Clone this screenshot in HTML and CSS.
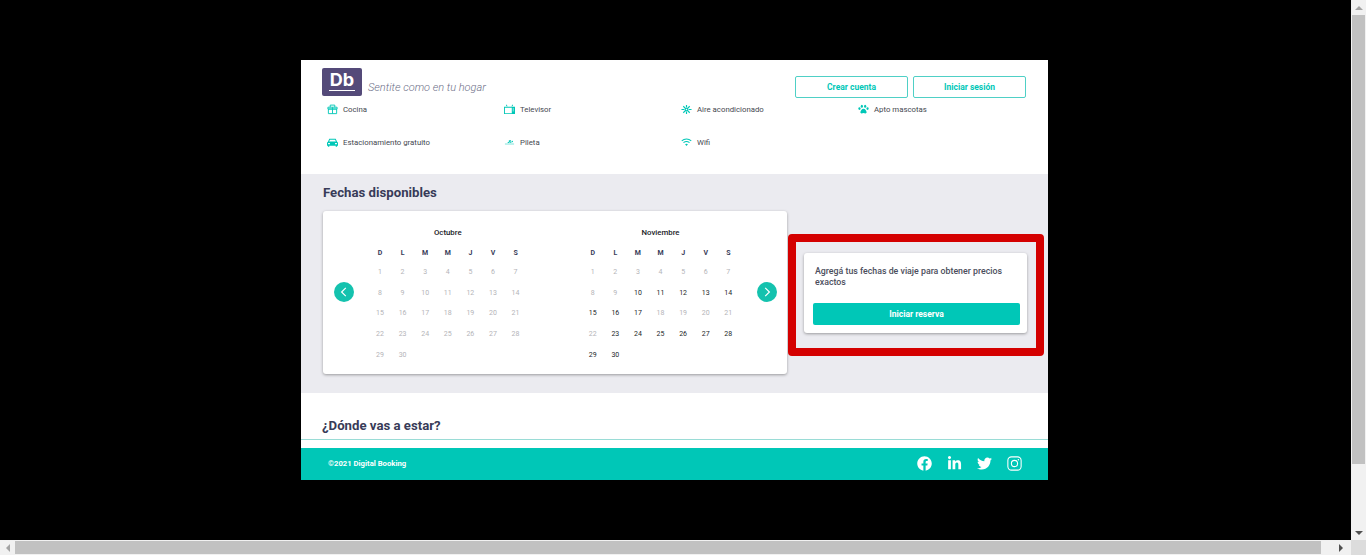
FILE: index.html
```html
<!DOCTYPE html>
<html lang="es">

<head>
  <meta charset="UTF-8">
  <title>Digital Booking</title>
  <link rel="stylesheet" href="styles.css">
</head>

<body>
  <div class="window">
    <div class="viewport">
      <div class="page">
        <header class="header">
          <div class="topbar">
            <div class="brand">
              <div class="logo"><span class="logo-text">Db</span></div>
              <span class="tagline">Sentite como en tu hogar</span>
            </div>
            <div class="auth">
              <button class="btn-outline">Crear cuenta</button>
              <button class="btn-outline">Iniciar sesión</button>
            </div>
          </div>
          <ul class="amenities">
            <li class="amenity">
              <svg class="amenity-icon" viewBox="0 0 12 12" fill="none" stroke="currentColor" stroke-width="1">
                <path d="M1.500 5.500h9v5h-9zM1 3.500h10v2H1zM6 3.500v7M3.500 3.500V1.200h5v2.300" />
              </svg>
              <span>Cocina</span>
            </li>
            <li class="amenity">
              <svg class="amenity-icon" viewBox="0 0 12 12" fill="currentColor">
                <path fill-rule="evenodd" d="M0 3h12v8H0zM1 4v6h7.500V4zM9.500 5v1h1.200V5zM9.500 7v1h1.200V7zM2 1.200l.6-.6L4 2.500H2.800zM10 1.200 9.400.6 8 2.500h1.200z" />
              </svg>
              <span>Televisor</span>
            </li>
            <li class="amenity">
              <svg class="amenity-icon" viewBox="0 0 12 12" fill="none" stroke="currentColor" stroke-width="1.300">
                <path d="M.5 6h3M8.500 6h3M6 1v2.500M6 8.500V11M2.500 2.500l2 2M7.500 7.500l2 2M9.500 2.500l-2 2M4.500 7.500l-2 2" />
                <circle cx="6" cy="6" r="1.500" />
              </svg>
              <span>Aire acondicionado</span>
            </li>
            <li class="amenity">
              <svg class="amenity-icon" viewBox="0 0 12 12" fill="currentColor">
                <ellipse cx="1.600" cy="5" rx="1.200" ry="1.500" />
                <ellipse cx="4.200" cy="2.400" rx="1.200" ry="1.700" />
                <ellipse cx="7.800" cy="2.400" rx="1.200" ry="1.700" />
                <ellipse cx="10.400" cy="5" rx="1.200" ry="1.500" />
                <path d="M6 5.200c1.700 0 3.400 2.300 3.400 3.900 0 1.500-1.500 1.300-3.400.8-1.900.5-3.400.7-3.400-.8C2.600 7.500 4.300 5.200 6 5.200z" />
              </svg>
              <span>Apto mascotas</span>
            </li>
            <li class="amenity">
              <svg class="amenity-icon" viewBox="0 0 12 12" fill="currentColor">
                <path fill-rule="evenodd" d="M2.500 2h7L11 5.200c.6.2 1 .7 1 1.300v3H11v1H9.500v-1h-7v1H1v-1H0v-3c0-.6.4-1.100 1-1.300zM3.200 3 2.300 5h7.400l-.9-2zM1.200 6.500v1.500h2V6.500zM8.800 6.500v1.500h2V6.500z" />
              </svg>
              <span>Estacionamiento gratuito</span>
            </li>
            <li class="amenity">
              <svg class="amenity-icon" viewBox="0 0 12 12" fill="currentColor">
                <path d="M3.500 6.200 5.800 4.600 5 3.900l2.500-.7.400.7-1.200.5 1.700 1.800-.9.400-1.100-.9-1.400.8zM1 7.300h10v.7H1z" />
                <circle cx="9" cy="4.900" r=".8" />
              </svg>
              <span>Pileta</span>
            </li>
            <li class="amenity">
              <svg class="amenity-icon" viewBox="0 0 12 12" fill="none" stroke="currentColor" stroke-width="1.100">
                <path d="M.8 4.200c3-2.700 7.400-2.700 10.400 0M2.700 6.200c1.900-1.600 4.700-1.600 6.600 0" />
                <path d="M4.400 8 6 9.800 7.600 8C6.700 7.200 5.300 7.200 4.400 8z" fill="currentColor" stroke="none" />
              </svg>
              <span>Wifi</span>
            </li>
          </ul>
        </header>

        <section class="dates">
          <h2 class="section-title">Fechas disponibles</h2>
          <div class="dates-row">
            <div class="calendar">
              <button class="cal-nav">
                <svg viewBox="0 0 10 10" fill="none" stroke="currentColor" stroke-width="1">
                  <path d="M6.500 1.500 3 5l3.500 3.500" />
                </svg>
              </button>
              <div class="month month-oct">
                <h3 class="month-name">Octubre</h3>
                <div class="month-grid">
                  <b>D</b><b>L</b><b>M</b><b>M</b><b>J</b><b>V</b><b>S</b>
                  <span>1</span><span>2</span><span>3</span><span>4</span><span>5</span><span>6</span><span>7</span>
                  <span>8</span><span>9</span><span>10</span><span>11</span><span>12</span><span>13</span><span>14</span>
                  <span>15</span><span>16</span><span>17</span><span>18</span><span>19</span><span>20</span><span>21</span>
                  <span>22</span><span>23</span><span>24</span><span>25</span><span>26</span><span>27</span><span>28</span>
                  <span>29</span><span>30</span>
                </div>
              </div>
              <div class="month month-nov">
                <h3 class="month-name">Noviembre</h3>
                <div class="month-grid">
                  <b>D</b><b>L</b><b>M</b><b>M</b><b>J</b><b>V</b><b>S</b>
                  <span>1</span><span>2</span><span>3</span><span>4</span><span>5</span><span>6</span><span>7</span>
                  <span>8</span><span>9</span><span class="on">10</span><span class="on">11</span><span class="on">12</span><span class="on">13</span><span class="on">14</span>
                  <span class="on">15</span><span class="on">16</span><span class="on">17</span><span>18</span><span>19</span><span>20</span><span>21</span>
                  <span>22</span><span class="on">23</span><span class="on">24</span><span class="on">25</span><span class="on">26</span><span class="on">27</span><span class="on">28</span>
                  <span class="on">29</span><span class="on">30</span>
                </div>
              </div>
              <button class="cal-nav">
                <svg viewBox="0 0 10 10" fill="none" stroke="currentColor" stroke-width="1">
                  <path d="M3.500 1.500 7 5 3.500 8.500" />
                </svg>
              </button>
            </div>
            <div class="highlight">
              <div class="cta-card">
                <p class="cta-text">Agregá tus fechas de viaje para obtener precios exactos</p>
                <button class="btn-solid">Iniciar reserva</button>
              </div>
            </div>
          </div>
        </section>

        <section class="location">
          <h2 class="section-title">¿Dónde vas a estar?</h2>
        </section>

        <footer class="footer">
          <span class="copyright">©2021 Digital Booking</span>
          <div class="social">
            <svg class="social-icon" viewBox="0 0 512 512" fill="currentColor">
              <path d="M504 256C504 119 393 8 256 8S8 119 8 256c0 123.78 90.69 226.38 209.25 245V327.69h-63V256h63v-54.64c0-62.15 37-96.48 93.67-96.48 27.14 0 55.52 4.84 55.52 4.84v61h-31.28c-30.8 0-40.41 19.12-40.41 38.73V256h68.78l-11 71.69h-57.78V501C413.31 482.38 504 379.78 504 256z" />
            </svg>
            <svg class="social-icon" viewBox="0 0 448 512" fill="currentColor">
              <path d="M100.28 448H7.4V148.9h92.88zM53.79 108.1C24.09 108.1 0 83.5 0 53.8a53.79 53.79 0 0 1 107.58 0c0 29.7-24.1 54.3-53.79 54.3zM447.9 448h-92.68V302.4c0-34.7-.7-79.2-48.29-79.2-48.29 0-55.69 37.7-55.69 76.7V448h-92.78V148.9h89.08v40.8h1.3c12.4-23.5 42.69-48.3 87.88-48.3 94 0 111.28 61.9 111.28 142.3V448z" />
            </svg>
            <svg class="social-icon" viewBox="0 0 512 512" fill="currentColor">
              <path d="M459.37 151.716c.325 4.548.325 9.097.325 13.645 0 138.72-105.583 298.558-298.558 298.558-59.452 0-114.68-17.219-161.137-47.106 8.447.974 16.568 1.299 25.34 1.299 49.055 0 94.213-16.568 130.274-44.832-46.132-.975-84.792-31.188-98.112-72.772 6.498.974 12.995 1.624 19.818 1.624 9.421 0 18.843-1.3 27.614-3.573-48.081-9.747-84.143-51.98-84.143-102.985v-1.299c13.969 7.797 30.214 12.67 47.431 13.319-28.264-18.843-46.781-51.005-46.781-87.391 0-19.492 5.197-37.36 14.294-52.954 51.655 63.675 129.3 105.258 216.365 109.807-1.624-7.797-2.599-15.918-2.599-24.04 0-57.828 46.782-104.934 104.934-104.934 30.213 0 57.502 12.67 76.67 33.137 23.715-4.548 46.456-13.32 66.599-25.34-7.798 24.366-24.366 44.833-46.132 57.827 21.117-2.273 41.584-8.122 60.426-16.243-14.292 20.791-32.161 39.308-52.628 54.253z" />
            </svg>
            <svg class="social-icon" viewBox="0 0 14 14" fill="none" stroke="currentColor" stroke-width="1">
              <rect x=".8" y=".8" width="12.400" height="12.400" rx="3.400" />
              <circle cx="7" cy="7" r="2.900" />
              <circle cx="10.600" cy="3.400" r=".7" fill="currentColor" stroke="none" />
            </svg>
          </div>
        </footer>
      </div>
    </div>
    <div class="vbar">
      <span class="arrow arrow-up"></span>
      <span class="vthumb"></span>
      <span class="arrow arrow-down"></span>
    </div>
  </div>
  <div class="hbar">
    <span class="arrow arrow-left"></span>
    <span class="hthumb"></span>
    <span class="arrow arrow-right"></span>
    <span class="corner"></span>
  </div>
</body>

</html>
```

FILE: styles.css
```css
* {
  box-sizing: border-box;
}

html,
body {
  height: 100%;
}

body {
  margin: 0;
  display: flex;
  flex-direction: column;
  overflow: hidden;
  background-color: #000000;
  font-family: Roboto, "Liberation Sans", sans-serif;
  color: #383b58;
}

h2,
h3,
p,
ul {
  margin: 0;
  padding: 0;
}

button {
  font-family: inherit;
  cursor: pointer;
}

.window {
  flex: 1;
  min-height: 0;
  display: flex;
}

.viewport {
  flex: 1;
  min-width: 0;
  padding: 60px 0 0 301px;
}

.page {
  width: 747px;
  background-color: #ffffff;
}

/* header */

.header {
  height: 114px;
  padding: 8px 22px 0 21px;
}

.topbar {
  height: 30px;
  display: flex;
  justify-content: space-between;
}

.brand {
  display: flex;
  align-items: flex-start;
  gap: 6px;
}

.logo {
  width: 40px;
  height: 28px;
  background-color: #544a79;
  border-radius: 2px;
  display: flex;
  justify-content: center;
}

.logo-text {
  height: 21px;
  margin-top: 2px;
  padding: 0 1px;
  border-bottom: 1px solid #ffffff;
  color: #ffffff;
  font-family: Inter, Roboto, sans-serif;
  font-size: 18px;
  font-weight: 700;
  line-height: 20px;
}

.tagline {
  margin-top: 13px;
  font-size: 11px;
  font-style: italic;
  font-weight: 300;
  line-height: 14px;
  color: #6d6f88;
}

.auth {
  display: flex;
  align-items: flex-end;
  gap: 5px;
}

.btn-outline {
  width: 113px;
  height: 22px;
  padding: 0;
  background-color: #ffffff;
  border: 1px solid #4fd0c6;
  border-radius: 2px;
  color: #00c7b7;
  font-size: 8.500px;
  font-weight: 700;
}

.amenities {
  list-style: none;
  display: grid;
  grid-template-columns: repeat(4, 177px);
  grid-auto-rows: 22px;
  row-gap: 11px;
  padding-left: 5px;
}

.amenity {
  display: flex;
  align-items: center;
  gap: 5px;
  font-size: 7.800px;
  color: #45474f;
}

.amenity-icon {
  width: 11px;
  height: 11px;
  color: #00c7b7;
}

/* dates */

.dates {
  height: 219px;
  padding: 11px 0 0 22px;
  background-color: #ebebf0;
}

.section-title {
  font-size: 13.200px;
  font-weight: 700;
  line-height: 16px;
  color: #383b58;
}

.dates-row {
  display: flex;
  align-items: flex-start;
  margin-top: 10px;
}

.calendar {
  width: 464px;
  height: 163px;
  padding: 0 11px 2px;
  display: flex;
  align-items: center;
  background-color: #ffffff;
  border-radius: 3px;
  box-shadow: 0 1px 3px rgba(0, 0, 0, 0.35);
}

.cal-nav {
  flex: none;
  width: 20px;
  height: 20px;
  padding: 4px;
  display: flex;
  background-color: #14c2ae;
  border: none;
  border-radius: 50%;
  color: #ffffff;
}

.month {
  align-self: flex-start;
  padding-top: 16px;
}

.month-oct {
  margin-left: 14.700px;
}

.month-nov {
  margin-left: 54.600px;
  margin-right: 17.500px;
}

.month-name {
  font-size: 7.800px;
  font-weight: 500;
  line-height: 11px;
  text-align: center;
  color: #191b27;
}

.month-grid {
  display: grid;
  grid-template-columns: repeat(7, 22.600px);
  grid-template-rows: 19px repeat(5, 20.600px);
  margin-top: 5px;
  font-size: 7px;
  line-height: 10px;
  text-align: center;
  align-items: center;
}

.month-grid b {
  font-weight: 700;
  color: #383b58;
}

.month-grid span {
  font-weight: 400;
  color: #b4b4b8;
}

.month-grid .on {
  color: #1d1f2b;
}

.highlight {
  width: 256px;
  height: 122px;
  margin: 23px 0 0 1px;
  padding: 11px 16px 0 8px;
  border: 8px solid #d40000;
  border-radius: 4px;
}

.cta-card {
  width: 223px;
  height: 80px;
  padding: 13px 7px 0 9px;
  background-color: #ffffff;
  border-radius: 3px;
  box-shadow: 0 1px 3px rgba(0, 0, 0, 0.35);
}

.cta-text {
  padding-left: 2px;
  font-size: 8.800px;
  font-weight: 500;
  line-height: 11px;
  color: #4b4e5c;
}

.btn-solid {
  display: block;
  width: 100%;
  height: 22px;
  margin-top: 15px;
  padding: 0;
  background-color: #00c7b7;
  border: none;
  border-radius: 2px;
  color: #ffffff;
  font-size: 8.500px;
  font-weight: 700;
}

/* location */

.location {
  height: 47px;
  padding: 25px 0 0 21px;
  border-bottom: 1px solid #9adcd6;
}

.footer {
  height: 32px;
  margin-top: 8px;
  padding: 0 26px 2px 27px;
  display: flex;
  align-items: center;
  justify-content: space-between;
  background-color: #00c7b7;
  color: #ffffff;
}

.copyright {
  font-size: 7.700px;
  font-weight: 700;
}

.social {
  display: flex;
  align-items: center;
  gap: 15px;
}

.social-icon {
  width: 15px;
  height: 15px;
}

/* browser scrollbars */

.vbar {
  flex: none;
  width: 15px;
  display: flex;
  flex-direction: column;
  background-color: #f1f1f1;
}

.vthumb {
  height: 449px;
  margin: 0 1px;
  background-color: #c1c1c1;
}

.hbar {
  flex: none;
  height: 15px;
  display: flex;
  align-items: center;
  background-color: #f1f1f1;
}

.hthumb {
  width: 1306px;
  height: 13px;
  background-color: #c1c1c1;
}

.corner {
  width: 15px;
  height: 15px;
  background-color: #dcdcdc;
}

.arrow {
  flex: none;
  width: 15px;
  height: 15px;
  display: flex;
  align-items: center;
  justify-content: center;
}

.arrow::before {
  content: "";
  border: 4px solid transparent;
}

.arrow-up::before {
  margin-top: -4px;
  border-bottom-color: #a3a3a3;
}

.arrow-down {
  margin-top: auto;
}

.arrow-down::before {
  margin-top: 4px;
  border-top-color: #505050;
}

.arrow-left::before {
  margin-left: -4px;
  border-right-color: #a3a3a3;
}

.arrow-right {
  width: 30px;
}

.arrow-right::before {
  margin-left: 14px;
  border-left-color: #505050;
}
```
